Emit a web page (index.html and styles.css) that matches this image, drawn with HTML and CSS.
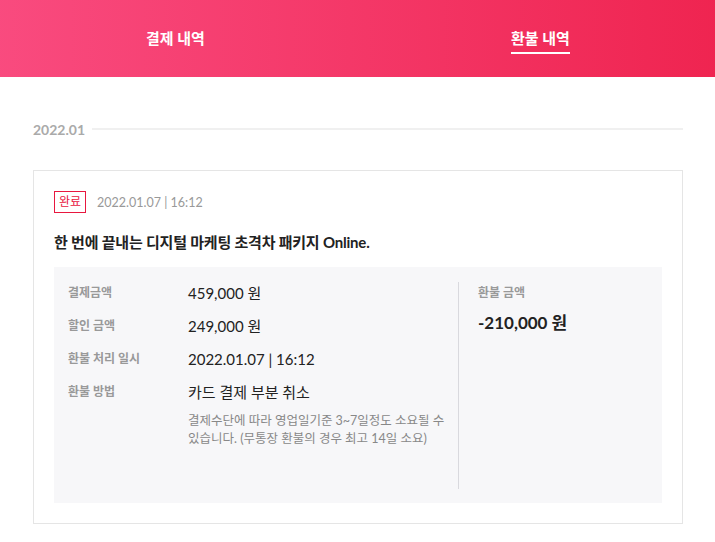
FILE: index.html
```html
<!DOCTYPE html>
<html lang="ko">
<head>
<meta charset="utf-8">
<link rel="stylesheet" href="styles.css">
</head>
<body>
<header class="tabs">
  <div class="tab"><span>결제 내역</span></div>
  <div class="tab active"><span>환불 내역</span></div>
</header>
<main class="content">
  <div class="month">
    <span class="month-label">2022.01</span>
    <span class="month-line"></span>
  </div>
  <section class="card">
    <div class="meta">
      <span class="badge">완료</span>
      <span class="date">2022.01.07 | 16:12</span>
    </div>
    <h2 class="title">한 번에 끝내는 디지털 마케팅 초격차 패키지 Online.</h2>
    <div class="detail">
      <div class="rows">
        <div class="row"><span class="label">결제금액</span><span class="value">459,000 원</span></div>
        <div class="row"><span class="label">할인 금액</span><span class="value">249,000 원</span></div>
        <div class="row"><span class="label">환불 처리 일시</span><span class="value">2022.01.07 | 16:12</span></div>
        <div class="row"><span class="label">환불 방법</span>
          <div class="value">카드 결제 부분 취소
            <p class="note">결제수단에 따라 영업일기준 3~7일정도 소요될 수 있습니다. (무통장 환불의 경우 최고 14일 소요)</p>
          </div>
        </div>
      </div>
      <div class="divider"></div>
      <div class="refund">
        <span class="label">환불 금액</span>
        <span class="refund-amount">-210,000 원</span>
      </div>
    </div>
  </section>
</main>
</body>
</html>
```

FILE: styles.css
```css
* { box-sizing: border-box; }
html, body { overflow-x: hidden; }
body {
  margin: 0;
  font-family: Lato, "Noto Sans CJK KR", sans-serif;
  color: #222;
  background: #fff;
}
.tabs {
  display: flex;
  height: 77px;
  margin: 0 -8px 0 -7px;
  background: linear-gradient(90deg, #f94b7f 0%, #ef2450 100%);
}
.tab {
  flex: 1;
  display: flex;
  justify-content: center;
  padding-top: 28px;
  color: #fff;
  font-size: 15px;
  font-weight: 700;
}
.tab span {
  height: 26px;
  line-height: 20px;
}
.tab.active span {
  border-bottom: 2px solid #fff;
}
.content {
  padding: 0 32px 0 33px;
}
.month {
  display: flex;
  align-items: center;
  margin-top: 42px;
  height: 20px;
}
.month-label {
  font-size: 14px;
  font-weight: 700;
  color: #aaa;
}
.month-line {
  flex: 1;
  height: 2px;
  background: #f0f0f0;
  margin-left: 7px;
}
.card {
  margin-top: 31px;
  border: 1px solid #e5e5e5;
  padding: 20px 20px 20px 20px;
}
.meta {
  display: flex;
  align-items: center;
  gap: 11px;
}
.badge {
  border: 1px solid #e8173f;
  color: #e8173f;
  font-size: 12px;
  height: 22px;
  line-height: 20px;
  padding: 0 4px;
}
.date {
  font-size: 12.5px;
  color: #999;
}
.title {
  margin: 18px 0 14px 0;
  font-size: 15px;
  letter-spacing: -0.2px;
  font-weight: 700;
  color: #222;
  line-height: 22px;
}
.detail {
  display: flex;
  background: #f7f7f9;
  padding: 15px 0 14px 14px;
  height: 236px;
}
.rows {
  width: 390px;
  display: flex;
  flex-direction: column;
  gap: 11px;
}
.row {
  display: flex;
}
.label {
  font-size: 12px;
  font-weight: 700;
  color: #999;
  line-height: 22px;
}
.row .label {
  width: 120px;
  flex: none;
}
.value {
  font-size: 15px;
  color: #222;
  line-height: 22px;
  width: 262px;
}
.note {
  margin: 9px 0 0 0;
  font-size: 12.5px;
  color: #888;
  line-height: 18px;
}
.divider {
  width: 1px;
  background: #d9d9de;
}
.refund {
  display: flex;
  flex-direction: column;
  padding: 0 0 0 19px;
  gap: 8px;
}
.refund-amount {
  font-size: 17px;
  font-weight: 700;
  color: #222;
  line-height: 22px;
}
```
